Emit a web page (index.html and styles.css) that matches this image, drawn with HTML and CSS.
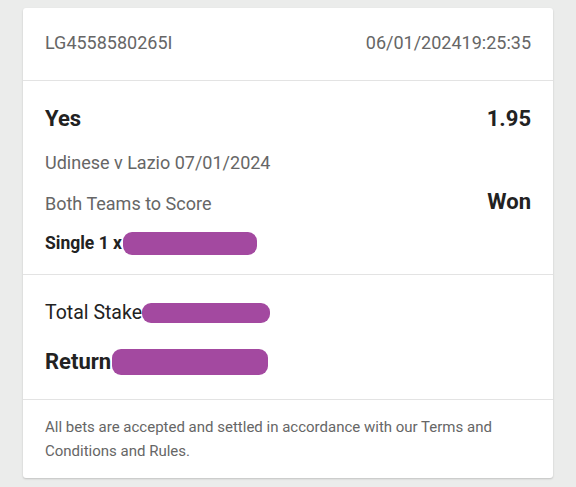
FILE: index.html
```html
<!DOCTYPE html>
<html>
<head>
<meta charset="utf-8">
<link rel="stylesheet" href="styles.css">
</head>
<body>
<div class="card">
  <div class="header">
    <span>LG4558580265I</span>
    <span>06/01/202419:25:35</span>
  </div>
  <div class="section selection">
    <div class="row title-row">
      <span class="big">Yes</span>
      <span class="big">1.95</span>
    </div>
    <div class="row muted event">Udinese v Lazio 07/01/2024</div>
    <div class="row market">
      <span class="muted">Both Teams to Score</span>
      <span class="status">Won</span>
    </div>
    <div class="row single">Single 1 x<span class="redact r1"></span></div>
  </div>
  <div class="section totals">
    <div class="row stake">Total Stake<span class="redact r2"></span></div>
    <div class="row ret">Return<span class="redact r3"></span></div>
  </div>
  <div class="footer">
    All bets are accepted and settled in accordance with our Terms and Conditions and Rules.
  </div>
</div>
</body>
</html>
```

FILE: styles.css
```css
html, body {
  margin: 0;
  padding: 0;
}
body {
  background: #ebeceb;
  font-family: Roboto, "Liberation Sans", sans-serif;
  color: #222;
  padding: 8px 23px 9px;
}
.card {
  background: #fff;
  border-radius: 3px;
  box-shadow: 0 1px 2px rgba(0, 0, 0, 0.18);
}
.header {
  display: flex;
  justify-content: space-between;
  padding: 23px 22px 25px;
  font-size: 18px;
  line-height: 24px;
  color: #666;
  border-bottom: 1px solid #e3e3e3;
}
.section {
  padding: 0 22px;
  border-bottom: 1px solid #e3e3e3;
}
.row {
  display: flex;
  justify-content: space-between;
  align-items: center;
}
.selection {
  padding-top: 24px;
  padding-bottom: 19px;
}
.title-row {
  line-height: 28px;
}
.big {
  font-size: 22px;
  font-weight: 700;
}
.muted {
  color: #666;
}
.event {
  font-size: 18px;
  line-height: 24px;
  margin-top: 18px;
}
.market {
  font-size: 18px;
  line-height: 24px;
  margin-top: 17px;
}
.status {
  font-size: 22px;
  font-weight: 700;
  margin-top: -4px;
}
.single {
  justify-content: flex-start;
  font-size: 17.5px;
  font-weight: 700;
  line-height: 24px;
  margin-top: 15px;
}
.redact {
  display: inline-block;
  background: #a349a0;
  border-radius: 9px;
}
.r1 {
  width: 134px;
  height: 23px;
  margin-left: 1px;
}
.totals {
  padding-top: 26px;
  padding-bottom: 23px;
}
.stake {
  justify-content: flex-start;
  font-size: 19.5px;
  line-height: 24px;
}
.r2 {
  width: 128px;
  height: 20px;
}
.ret {
  justify-content: flex-start;
  font-size: 22px;
  font-weight: 700;
  line-height: 28px;
  margin-top: 23px;
}
.r3 {
  width: 156px;
  height: 26px;
  margin-left: 1px;
}
.footer {
  padding: 15px 22px 15px;
  font-size: 15px;
  line-height: 24px;
  color: #666;
}
```
